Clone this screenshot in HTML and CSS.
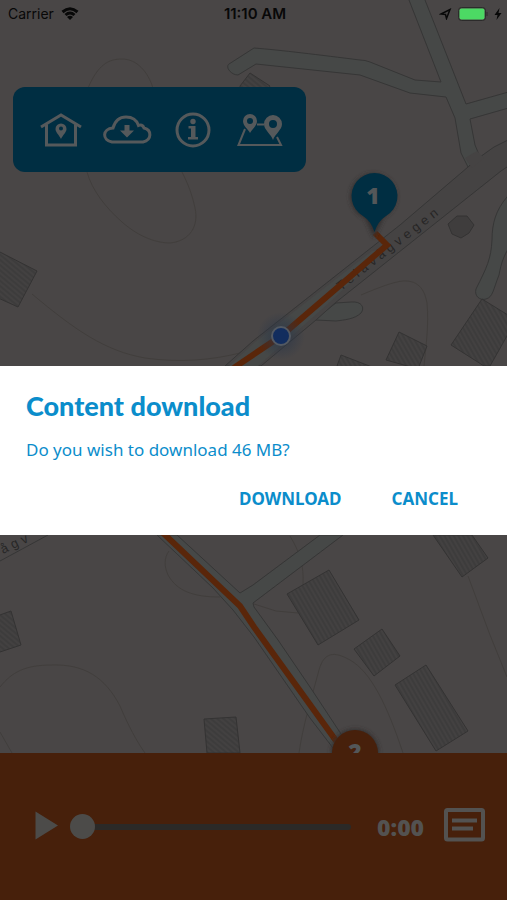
FILE: index.html
```html
<!DOCTYPE html>
<html lang="en">
<head>
<meta charset="utf-8">
<meta name="viewport" content="width=device-width, initial-scale=1">
<title>Content download</title>
<link rel="stylesheet" href="styles.css">
</head>
<body>
<div class="screen">
  <main class="map-area">
    <svg class="map" viewBox="0 0 507 753" preserveAspectRatio="xMidYMid slice" aria-hidden="true">
      <defs>
        <pattern id="hatch-a" width="4" height="4" patternUnits="userSpaceOnUse" patternTransform="rotate(-30)"><rect width="4" height="4" fill="#434141"/><path d="M1 0V4" stroke="#373636"/></pattern>
        <pattern id="hatch-b" width="4" height="4" patternUnits="userSpaceOnUse" patternTransform="rotate(-50)"><rect width="4" height="4" fill="#434141"/><path d="M1 0V4" stroke="#373636"/></pattern>
        <radialGradient id="glow"><stop offset="0.3" stop-color="#2a3648" stop-opacity="0.6"/><stop offset="1" stop-color="#2a3648" stop-opacity="0"/></radialGradient>
        <filter id="soft" x="-30%" y="-30%" width="160%" height="160%"><feGaussianBlur stdDeviation="2"/></filter>
      </defs>

      <g class="contour">
        <path d="M88 88C98 65 108 59 122 59C137 59 148 72 153 88M87 172C92 190 105 207 122 222C140 238 158 243 170 243C190 241 199 226 195 208C192 194 188 184 182 172"/>
        <path d="M32 294C75 330 105 351 145 358C180 363 212 360 240 353"/>
        <path d="M361 295C380 287 393 282 403 281C420 280 425 292 427 303C429 325 426 345 424 366"/>
        <path d="M169 551C164 558 164 566 168 575C177 591 193 597 220 597"/>
        <path d="M0 687C12 672 25 665 52 665C84 664 105 677 120 706C128 725 137 742 145 753M0 732L12 753"/>
        <path d="M254 604L276 611L298 613M290 536C300 553 304 565 303 585"/>
        <path d="M299 753C303 725 311 700 319 670C324 652 334 651 350 660C371 672 387 705 403 753"/>
        <path d="M468 576L490 635L507 677"/>
      </g>

      <path class="building" fill="url(#hatch-b)" d="M240 86L250 73L270 86L264 96H240Z"/>

      <path class="road lane" d="M254 48C280 50 320 55 360 60Q365 60 370 62L415 80L441 82L409 0L405 -9H421L425 0L466 104L512 91V107L470 119L475 145L480 157L468 167L461 153L455 118L446 97L410 93L360 75L256 64L238 75C231 75 225 67 229 64Z"/>
      <path class="road lane" d="M320 315L336 303L351 302C362 301 365 308 361 313C355 319 344 320 336 321L316 320Z"/>
      <path class="road lane" d="M515 185L507 197C496 210 492 223 492 240C491 259 487 267 476 289C474 296 480 301 486 299C493 297 493 290 499 275C501 264 504 252 515 240Z"/>
      <path class="road main" d="M225 366L253 341L400 225L468 167L480 157Q493 146 510 139V165L501 171L335 303L316 320L261 366Z"/>
      <path class="fill-main" d="M465 158L477 151L484 158L472 168Z"/>
      <path class="fill-lane" d="M229 366L255 342L345 272L372 251L384 251L330 302L258 366Z"/>

      <path class="road lane" d="M253 585L320 535H343L253 603L254 607L278 640L310 687L345 740L333 748L310 718L254 637L233 610L213 588L157 535H177L240 593Z"/>
      <path class="edge" d="M0 561L48 535"/>

      <path class="building" fill="url(#hatch-b)" d="M-4 250L37 271L18 307L-4 297Z"/>
      <path class="building" fill="url(#hatch-a)" d="M482 299L516 320L490 366H484L451 345Z"/>
      <path class="building" fill="url(#hatch-a)" d="M399 332L427 346L418 369L386 360Z"/>
      <path class="building" fill="url(#hatch-a)" d="M341 355L372 367L370 376L337 366Z"/>
      <path class="building round" d="M448 224L457 216L467 216L474 225L469 233L461 238L452 234Z"/>
      <path class="building" fill="url(#hatch-a)" d="M433 535H472L488 558L462 577Z"/>
      <path class="building" fill="url(#hatch-a)" d="M287 594L329 570L359 620L318 645Z"/>
      <path class="building" fill="url(#hatch-a)" d="M354 649L382 629L400 656L374 676Z"/>
      <path class="building" fill="url(#hatch-a)" d="M395 685L426 665L468 731L436 751Z"/>
      <path class="building" fill="url(#hatch-b)" d="M-3 616L11 611L21 645L-3 653Z"/>
      <path class="building" fill="url(#hatch-b)" d="M204 719L236 717L240 753H207Z"/>

      <text class="street" transform="translate(341 291) rotate(-38)">Telavågvegen</text>
      <text class="street" transform="translate(3 554) rotate(-26)">ågv</text>

      <path class="route" d="M375 233L387 245L281 336L235 367L140 455L163 533L240 606L254 627L342 749"/>
      <circle cx="281" cy="336" r="24" fill="url(#glow)"/>
      <circle class="position" cx="281" cy="336" r="9"/>

      <path class="pin-shadow" filter="url(#soft)" d="M374 238L365 218A23 23 0 1 1 384 217Z"/>
      <path class="pin-blue" d="M374.500 232Q371 221 363 216A23 23 0 1 1 386 216Q378 221 374.500 232Z"/>
      <text class="pin-number" x="373" y="204">1</text>
      <circle class="pin-shadow" filter="url(#soft)" cx="355" cy="753" r="24"/>
      <circle class="pin-orange" cx="355" cy="753" r="23"/>
      <text class="pin-number" x="355" y="760">2</text>
    </svg>

    <header class="status">
      <div class="status-left">
        <span>Carrier</span>
        <svg class="wifi" viewBox="0 0 18 14" aria-hidden="true"><path d="M1.500 5Q9-1.500 16.500 5M4.500 8Q9 4 13.500 8"/><path class="solid" d="M6 10Q9 7.500 12 10L9 13Z"/></svg>
      </div>
      <span class="clock">11:10 AM</span>
      <div class="status-right">
        <svg class="locate" viewBox="0 0 13 12" aria-hidden="true"><path d="M2 6L11 1.500L7.500 10.500L6.500 6.500Z"/></svg>
        <svg class="battery" viewBox="0 0 30 14" aria-hidden="true"><rect class="case" x="0.500" y="0.500" width="27" height="13" rx="3"/><rect class="charge" x="1.500" y="1.500" width="25" height="11" rx="2"/><path class="tip" d="M29 5V9"/></svg>
        <svg class="bolt" viewBox="0 0 8 12" aria-hidden="true"><path d="M5.500 0L0.500 7H3.500L2.500 12L7.500 5H4.500Z"/></svg>
      </div>
    </header>

    <nav class="toolbar" aria-label="Tour">
      <button class="tool" type="button" aria-label="Home">
        <svg width="44" height="36" viewBox="0 0 44 36"><path class="line" d="M2 15L22 3L42 15M7.500 12V33H36.500V12"/><path class="solid" fill-rule="evenodd" d="M22 27C20 23 16.500 20 16.500 17A5.500 5.500 0 0 1 27.500 17C27.500 20 24 23 22 27ZM22 14.500A2 2 0 1 0 22 18.500A2 2 0 1 0 22 14.500Z"/></svg>
      </button>
      <button class="tool" type="button" aria-label="Download">
        <svg width="50" height="36" viewBox="0 0 50 36"><path class="line" d="M9 30C-1 28 -1 17 10 16C12 9 16 5 23 5C30 5 34 9 35.500 13.500C37.500 12.500 40 13 41 16C49 18 49 28 40 30Z"/><path class="solid" d="M21.500 13H26.500V18.500H31L24 25.500L17 18.500H21.500Z"/></svg>
      </button>
      <button class="tool" type="button" aria-label="Information">
        <svg width="40" height="36" viewBox="0 0 40 36"><circle class="line" cx="20" cy="18" r="16"/><circle class="solid" cx="20" cy="9.500" r="2.700"/><path class="solid" d="M15.500 14H22.500V25H25V27.500H15V25H18V16.500H15.500Z"/></svg>
      </button>
      <button class="tool" type="button" aria-label="Route">
        <svg width="54" height="36" viewBox="0 0 54 36"><path class="line thin" d="M12 17L5.500 33H48L44 25M24 12.500H31"/><path class="solid" fill-rule="evenodd" d="M17 21C15 17 10 14 10 9A7 7 0 0 1 24 9C24 14 19 17 17 21ZM17 6A3 3 0 1 0 17 12A3 3 0 1 0 17 6ZM40 28C38 22 31 18 31 12A9 9 0 0 1 49 12C49 18 42 22 40 28ZM40 8A4 4 0 1 0 40 16A4 4 0 1 0 40 8Z"/></svg>
      </button>
    </nav>
  </main>

  <footer class="player">
    <button class="play" type="button" aria-label="Play"><svg width="23" height="32" viewBox="0 0 23 32"><path d="M0.500 0.500L23 14.500L0.500 28.500Z"/></svg></button>
    <input class="seek" type="range" min="0" max="100" value="0" aria-label="Playback position">
    <time class="elapsed">0:00</time>
    <button class="transcript" type="button" aria-label="Transcript"><svg width="41" height="38" viewBox="0 0 41 38"><rect x="2" y="2" width="37" height="29.500" rx="1.500"/><path d="M8 12.500H33M8 20.500H29"/></svg></button>
  </footer>
</div>

<div class="overlay">
  <section class="dialog" role="dialog" aria-modal="true" aria-labelledby="dialog-title" aria-describedby="dialog-text">
    <h1 class="dialog-title" id="dialog-title">Content download</h1>
    <p class="dialog-text" id="dialog-text">Do you wish to download 46 MB?</p>
    <div class="actions">
      <button class="action" type="button">DOWNLOAD</button>
      <button class="action" type="button">CANCEL</button>
    </div>
  </section>
</div>
</body>
</html>
```

FILE: styles.css
```css
* { box-sizing: border-box; }

body {
  margin: 0;
  background: #494646;
  font-family: "Noto Sans", "Open Sans", sans-serif;
}

button {
  display: flex;
  padding: 0;
  border: 0;
  background: none;
  font: inherit;
  color: inherit;
}

.screen {
  display: flex;
  flex-direction: column;
  min-height: 100vh;
}

.map-area {
  position: relative;
  flex: 1;
  overflow: hidden;
}

/* Map drawing */
.map {
  position: absolute;
  inset: 0;
  width: 100%;
  height: 100%;
}

.contour { fill: none; stroke: #413e3c; stroke-width: 1; }
.road { stroke: #363636; stroke-width: 1; }
.lane, .fill-lane { fill: #464847; }
.main, .fill-main { fill: #454343; }
.edge { fill: none; stroke: #363636; }
.building { stroke: #343333; stroke-width: 1; }
.round { fill: #3f3d3d; }
.route { fill: none; stroke: #5a260a; stroke-width: 6; }
.position { fill: #122d5e; stroke: #535962; stroke-width: 2; }
.pin-shadow { fill: #302e2e; }
.pin-blue { fill: #002e42; }
.pin-orange { fill: #47200b; }

.street {
  font: 13px "Liberation Sans", sans-serif;
  letter-spacing: 4px;
  fill: #272626;
}

.pin-number {
  font: 800 23px "Open Sans", sans-serif;
  text-anchor: middle;
  fill: #535759;
}

/* Status bar */
.status {
  position: relative;
  display: grid;
  grid-template-columns: 1fr auto 1fr;
  align-items: center;
  height: 27px;
  padding: 0 5px 0 8px;
  font-family: Inter, sans-serif;
  font-size: 14px;
  color: #080808;
}

.clock { font-size: 15px; font-weight: 600; }
.status-left, .status-right { display: flex; align-items: center; }
.status-left { gap: 7px; }
.status-right { justify-content: flex-end; gap: 6px; }
.wifi { width: 18px; height: 14px; fill: none; stroke: #080808; stroke-width: 3; }
.wifi .solid { fill: #080808; stroke: none; }
.locate { width: 13px; height: 12px; fill: none; stroke: #080808; stroke-width: 1.5; }
.battery { width: 30px; height: 14px; }
.case { fill: none; stroke: #2c2b2b; }
.charge { fill: #4cd964; }
.tip { stroke: #2c2b2b; stroke-width: 1; }
.bolt { width: 8px; height: 12px; fill: #080808; }

/* Toolbar */
.toolbar {
  position: relative;
  display: flex;
  gap: 20px;
  width: fit-content;
  margin: 60px 0 0 13px;
  padding: 25px 19px 24px 26px;
  border-radius: 12px;
  background: #002e42;
}

.line { fill: none; stroke: #55595b; stroke-width: 3; }
.line.thin { stroke-width: 2; }
.tool .solid { fill: #55595b; }

/* Player */
.player {
  display: flex;
  align-items: center;
  min-height: 147px;
  padding: 0 22px 0 35px;
  background: #47200b;
  color: #535251;
}

.play { fill: #4c4b49; }

.seek {
  flex: 1;
  min-width: 0;
  height: 26px;
  margin: 0 26px 0 12px;
  background: none;
  appearance: none;
}

.seek::-webkit-slider-runnable-track {
  height: 6px;
  border-radius: 3px;
  background: #2b2927;
}

.seek::-webkit-slider-thumb {
  width: 25px;
  height: 25px;
  margin-top: -10px;
  border-radius: 50%;
  background: #4c4b49;
  appearance: none;
}

.elapsed {
  min-width: 49px;
  font: 800 23px/32px "Open Sans", sans-serif;
}

.transcript {
  margin-left: 18px;
  fill: none;
  stroke: #535251;
  stroke-width: 4;
}

/* Dialog */
.overlay {
  position: fixed;
  inset: 0;
  display: flex;
  align-items: center;
}

.dialog {
  width: 100%;
  padding: 24px 49px 20px 26px;
  background: #fff;
  color: #0b8dcb;
}

.dialog-title {
  margin: 0;
  font: 900 27px/32px Lato, sans-serif;
}

.dialog-text {
  margin: 16px 0 20px;
  font-size: 17px;
  line-height: 24px;
}

.actions {
  display: flex;
  justify-content: flex-end;
  gap: 50px;
  font-size: 17px;
  font-weight: 700;
  line-height: 33px;
}
```
